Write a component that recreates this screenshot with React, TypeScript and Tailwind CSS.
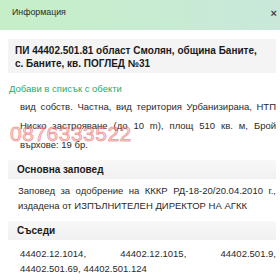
import React from "react";

export default function App() {
  return (
    <div className="relative w-[280px] h-[280px] overflow-hidden bg-white text-[#222] [font-family:'Liberation_Sans',Arial,sans-serif]">
      <div className="h-[30px] flex items-center justify-between pl-[12px] pr-[3px] pb-[4px] bg-gradient-to-r from-[#c6efc8] to-[#c9e8da] text-[8.8px] text-[#2a2a2a]">
        <span>Информация</span>
        <span className="text-[11px] font-bold text-[#444]">×</span>
      </div>
      <div className="pl-[8px] pr-[4px] pt-[9px]">
        <div className="bg-[#f4f4f4] pl-[7px] pr-[10px] pt-[5px] pb-[3px] text-[10px] leading-[13px] font-bold text-[#1a1a1a]">
          ПИ 44402.501.81 област Смолян, община Баните, с. Баните, кв. ПОГЛЕД №31
        </div>
        <div className="mt-[9px] pl-[1px] text-[9.5px] leading-[14px] text-[#2aa86b]">Добави в списък с обекти</div>
        <div className="mt-[1px] pl-[12px] text-[9.5px] leading-[19px] text-justify text-[#2a2a2a]">
          вид собств. Частна, вид територия Урбанизирана, НТП Ниско застрояване (до 10 m), площ 510 кв. м, Брой върхове: 19 бр.
        </div>
        <div className="mt-[6px] bg-gradient-to-b from-[#f8f8f8] to-[#f1f1f1] h-[19px] flex items-center pl-[9px] text-[10px] font-bold text-[#1a1a1a]">
          Основна заповед
        </div>
        <div className="mt-[4px] pl-[10px] text-[9.5px] leading-[15px] text-justify text-[#2a2a2a]">
          Заповед за одобрение на КККР РД-18-20/20.04.2010 г., издадена от ИЗПЪЛНИТЕЛЕН ДИРЕКТОР НА АГКК
        </div>
        <div className="mt-[8px] bg-gradient-to-b from-[#f8f8f8] to-[#f1f1f1] h-[19px] flex items-center pl-[9px] text-[10px] font-bold text-[#1a1a1a]">
          Съседи
        </div>
        <div className="mt-[6px] pl-[12px] text-[9.5px] leading-[15px] text-justify text-[#2a2a2a]">
          44402.12.1014, 44402.12.1015, 44402.501.9, 44402.501.69, 44402.501.124
        </div>
      </div>
      <div className="absolute left-[10px] top-[123px] text-[21px] leading-[22px] tracking-[0.5px] text-[rgba(255,190,190,0.45)] [-webkit-text-stroke:1px_rgba(220,60,60,0.45)] pointer-events-none">
        0876333522
      </div>
    </div>
  );
}
